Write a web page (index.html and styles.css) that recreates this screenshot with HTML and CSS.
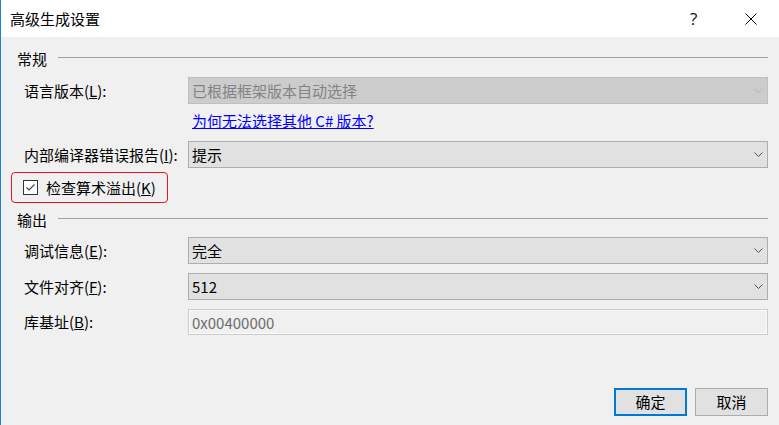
FILE: index.html
```html
<!DOCTYPE html>
<html lang="zh-CN">
<head>
<meta charset="utf-8">
<title>高级生成设置</title>
<link rel="stylesheet" href="styles.css">
</head>
<body>
<div class="window">
  <div class="titlebar">
    <span class="title">高级生成设置</span>
    <span class="help">?</span>
    <span class="close">
      <svg width="12" height="12" viewBox="0 0 12 12"><path d="M0.5 0.5L11.5 11.5M11.5 0.5L0.5 11.5" stroke="#000" stroke-width="1" fill="none"/></svg>
    </span>
  </div>
  <div class="content">
    <div class="section-head sh1"><span class="sh-text">常规</span><span class="sh-line"></span></div>

    <div class="field f-lang">
      <span class="label">语言版本(<u>L</u>):</span>
      <div class="combo disabled"><span class="combo-text">已根据框架版本自动选择</span><svg class="chev" width="9" height="5" viewBox="0 0 9 5"><path d="M0.5 0.5L4.5 4.5L8.5 0.5" fill="none" stroke-width="1"/></svg></div>
    </div>

    <div class="link-row"><a class="link">为何无法选择其他 C# 版本?</a></div>

    <div class="field f-err">
      <span class="label">内部编译器错误报告(<u>I</u>):</span>
      <div class="combo"><span class="combo-text">提示</span><svg class="chev" width="9" height="5" viewBox="0 0 9 5"><path d="M0.5 0.5L4.5 4.5L8.5 0.5" fill="none" stroke-width="1"/></svg></div>
    </div>

    <div class="check-group">
      <span class="checkbox">
        <svg width="13" height="13" viewBox="0 0 13 13"><path d="M2.5 6.5L5 9L10.5 3.5" stroke="#404040" stroke-width="1.1" fill="none"/></svg>
      </span>
      <span class="check-label">检查算术溢出(<u>K</u>)</span>
    </div>

    <div class="section-head sh2"><span class="sh-text">输出</span><span class="sh-line"></span></div>

    <div class="field f-debug">
      <span class="label">调试信息(<u>E</u>):</span>
      <div class="combo"><span class="combo-text">完全</span><svg class="chev" width="9" height="5" viewBox="0 0 9 5"><path d="M0.5 0.5L4.5 4.5L8.5 0.5" fill="none" stroke-width="1"/></svg></div>
    </div>

    <div class="field f-align">
      <span class="label">文件对齐(<u>F</u>):</span>
      <div class="combo"><span class="combo-text">512</span><svg class="chev" width="9" height="5" viewBox="0 0 9 5"><path d="M0.5 0.5L4.5 4.5L8.5 0.5" fill="none" stroke-width="1"/></svg></div>
    </div>

    <div class="field f-base">
      <span class="label">库基址(<u>B</u>):</span>
      <div class="textbox"><span class="tb-text">0x00400000</span></div>
    </div>
  </div>
  <div class="footer">
    <button class="btn btn-default">确定</button>
    <button class="btn">取消</button>
  </div>
</div>
</body>
</html>
```

FILE: styles.css
```css
* { box-sizing: border-box; }
html, body { margin: 0; padding: 0; }
body {
  width: 779px;
  height: 425px;
  overflow: hidden;
  background: #f0f0f0;
  font-family: "Noto Sans CJK SC", "Noto Sans", sans-serif;
  font-size: 15px;
  color: #000;
}
.window {
  height: 425px;
  border-left: 1px solid #1a84d8;
  display: flex;
  flex-direction: column;
  background: #f0f0f0;
}
.titlebar {
  height: 37px;
  background: #fff;
  display: flex;
  align-items: center;
  flex-shrink: 0;
}
.title {
  margin-left: 9px;
  line-height: 37px;
  flex: 1;
}
.help {
  width: 12px;
  line-height: 37px;
  font-family: "Open Sans", "Noto Sans", sans-serif;
  font-size: 17px;
  margin-right: 43px;
  color: #111;
}
.close {
  width: 12px;
  height: 12px;
  margin-right: 22px;
  display: flex;
}
.content {
  display: flex;
  flex-direction: column;
}
.section-head {
  display: flex;
  align-items: center;
  height: 22px;
  margin-left: 16px;
  margin-right: 11px;
}
.sh1 { margin-top: 11px; }
.sh2 { margin-top: 6px; }
.sh-text { line-height: 22px; }
.sh-line {
  flex: 1;
  height: 1px;
  background: #a0a0a0;
  margin-left: 11px;
  margin-bottom: 3px;
}
.field {
  display: grid;
  grid-template-columns: 164px 580px;
  align-items: center;
  margin-left: 23px;
  height: 27px;
}
.f-lang { margin-top: 7px; }
.f-err { margin-top: 9px; }
.f-debug { margin-top: 6px; }
.f-align { margin-top: 9px; }
.f-base { margin-top: 9px; height: 26px; }
.label { line-height: 22px; white-space: nowrap; }
.combo {
  height: 27px;
  background: #e1e1e1;
  border: 1px solid #adadad;
  display: flex;
  align-items: center;
  padding-left: 3px;
}
.combo-text { flex: 1; line-height: 22px; }
.chev {
  margin-right: 4px;
  stroke: #505050;
}
.combo.disabled {
  background: #cccccc;
  border-color: #bfbfbf;
  color: #838383;
}
.combo.disabled .chev {
  stroke: #b4b4b4;
}
.textbox {
  height: 26px;
  border: 1px solid #cccccc;
  box-shadow: inset 0 0 0 1px #fafafa;
  background: #f0f0f0;
  display: flex;
  align-items: center;
  padding-left: 3px;
  color: #6d6d6d;
}
.link-row {
  margin-top: 6px;
  height: 22px;
  margin-left: 191px;
}
.link {
  color: #0000ff;
  text-decoration: underline;
  line-height: 22px;
  cursor: pointer;
}
.check-group {
  margin-top: 4px;
  margin-left: 10px;
  width: 157px;
  height: 31px;
  border: 1px solid #e81123;
  border-radius: 4px;
  display: flex;
  align-items: center;
  padding-left: 11px;
}
.checkbox {
  width: 15px;
  height: 15px;
  border: 1px solid #333;
  background: #fff;
  display: flex;
}
.check-label {
  margin-left: 8px;
  line-height: 22px;
}
.footer {
  margin-top: auto;
  display: flex;
  justify-content: flex-end;
  gap: 8px;
  padding-right: 11px;
  padding-bottom: 9px;
}
.btn {
  width: 73px;
  height: 28px;
  background: #e1e1e1;
  border: 1px solid #adadad;
  font-family: "Noto Sans CJK SC", "Noto Sans", sans-serif;
  font-size: 15px;
  color: #000;
  padding: 0;
  line-height: 24px;
}
.btn-default {
  border: 2px solid #0078d7;
}
```
